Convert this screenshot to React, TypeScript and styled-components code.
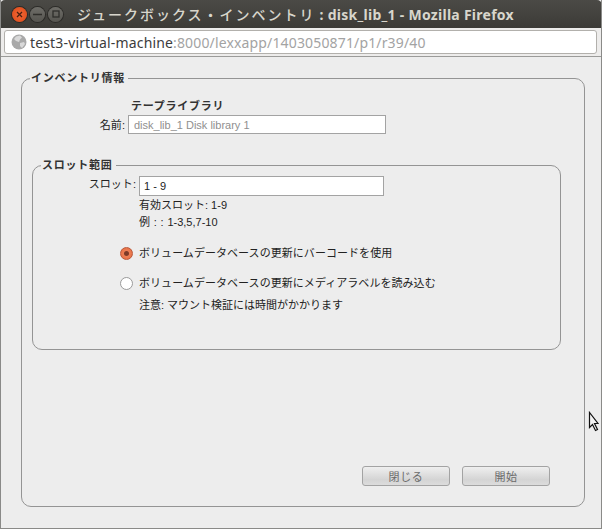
import React from "react";
import styled, { createGlobalStyle } from "styled-components";

const Global = createGlobalStyle`
  html, body { margin: 0; padding: 0; width: 602px; height: 529px; overflow: hidden; background: #ededed; }
  body { font-family: "Liberation Sans", "Noto Sans CJK JP", sans-serif; font-size: 11px; color: #222; }
  * { box-sizing: border-box; }
`;

const Page = styled.div`
  position: relative;
  width: 602px;
  height: 529px;
  display: flex;
  flex-direction: column;
  background: #ededed;
  border-right: 1px solid #8a8a88;
  border-left: 1px solid #8a8a88;
  border-bottom: 1px solid #8a8a88;
  overflow: hidden;
`;

const TitleBar = styled.header`
  height: 28px;
  flex: none;
  margin: 0 -1px;
  display: flex;
  align-items: center;
  padding: 0 0 0 12px;
  background: linear-gradient(#4b4a46, #3c3b37);
  border-radius: 5px 5px 0 0;
`;

const Dots = styled.div`
  display: flex;
  gap: 3px;
  margin-right: 14px;
`;

const Dot = styled.span<{ $bg: string }>`
  width: 15px;
  height: 15px;
  border-radius: 50%;
  display: flex;
  background: ${(p) => p.$bg};
  box-shadow: 0 0 0 1px #2c2b28;
  align-items: center;
  justify-content: center;
  svg { display: block; }
`;

const Title = styled.h1`
  margin: 0;
  font: bold 14px "Noto Sans", "Noto Sans CJK JP", sans-serif;
  color: #d8d6cc;
  white-space: nowrap;
  letter-spacing: 0.27px;
`;

const TitleCjk = styled.span`
  font-weight: 500;
  letter-spacing: 2px;
  margin-right: 4px;
`;

const UrlBar = styled.div`
  height: 29px;
  flex: none;
  padding: 2px 4px 0 3px;
  background: #edeceb;
  border-bottom: 1px solid #9b9b99;
`;

const UrlField = styled.div`
  height: 24px;
  background: #fff;
  border: 1px solid #b2b0ac;
  border-radius: 3px;
  display: flex;
  align-items: center;
  padding-left: 6px;
  gap: 3px;
  font: 14px "Noto Sans", sans-serif;
  letter-spacing: 0.15px;
  color: #a3a3a3;
  white-space: nowrap;
`;

const Host = styled.span`
  color: #3c3c3c;
`;

const Content = styled.main`
  flex: 1;
  padding: 14px 16px 21px 20px;
  display: flex;
  flex-direction: column;
`;

const Group = styled.fieldset<{ $h: number; $mr?: number }>`
  margin: 0 ${(p) => p.$mr ?? 0}px 0 0;
  padding: 0;
  min-width: 0;
  height: ${(p) => p.$h}px;
  border: 1px solid #949494;
  border-radius: 10px;
`;

const Legend = styled.legend`
  margin-left: 8px;
  padding: 0 3px 0 1px;
  font-weight: bold;
  font-size: 11px;
  line-height: 14px;
  letter-spacing: 0.75px;
  color: #333;
`;

const OuterBody = styled.div`
  height: 420px;
  display: flex;
  flex-direction: column;
  padding: 14px 10px 0 10px;
`;

const InnerBody = styled.div`
  height: 176px;
  display: flex;
  flex-direction: column;
  padding: 3px 0 0 0;
`;

const Heading = styled.div`
  margin-left: 99px;
  font-weight: bold;
  line-height: 14px;
  letter-spacing: 0.75px;
  color: #333;
`;

const FormRow = styled.div<{ $labelW: number; $top?: number }>`
  display: grid;
  grid-template-columns: ${(p) => p.$labelW}px auto;
  justify-content: start;
  align-items: center;
  column-gap: 3px;
  margin-top: ${(p) => p.$top ?? 0}px;
`;

const Label = styled.label<{ $lift?: number }>`
  text-align: right;
  color: #222;
  letter-spacing: 0.05px;
  padding-bottom: ${(p) => p.$lift ?? 0}px;
`;

const Field = styled.div<{ $w: number; $h: number; $muted?: boolean }>`
  width: ${(p) => p.$w}px;
  height: ${(p) => p.$h}px;
  padding: 0 5px 0 ${(p) => (p.$muted ? 5 : 4)}px;
  line-height: ${(p) => p.$h - 1}px;
  background: #fff;
  border: 1px solid #a3a3a3;
  color: ${(p) => (p.$muted ? "#8f8f8f" : "#222")};
  font-size: 11px;
`;

const Inner = styled.div`
  margin-top: 24px;
`;

const Hint = styled.div<{ $top: number }>`
  margin: ${(p) => p.$top}px 0 0 106px;
  line-height: 14px;
  color: #222;
`;

const Example = styled(Hint)`
  word-spacing: 0.7px;
`;

const RadioRow = styled.div<{ $top: number }>`
  margin: ${(p) => p.$top}px 0 0 87px;
  display: flex;
  align-items: center;
  gap: 6px;
  line-height: 14px;
  letter-spacing: 0.05px;
`;

const Radio = styled.span<{ $on?: boolean }>`
  width: 13px;
  height: 13px;
  flex: none;
  border-radius: 50%;
  display: flex;
  align-items: center;
  justify-content: center;
  border: 1px solid ${(p) => (p.$on ? "#b9583a" : "#9a9a9a")};
  background: ${(p) => (p.$on ? "radial-gradient(#f08a62, #e56a3e)" : "#fff")};
  &::after {
    content: "";
    display: ${(p) => (p.$on ? "block" : "none")};
    width: 5px;
    height: 5px;
    border-radius: 50%;
    background: #7d3a28;
  }
`;

const Spacer = styled.div`
  flex: 1;
`;

const Buttons = styled.div`
  display: flex;
  justify-content: flex-end;
  gap: 12px;
  padding: 0 24px 19px 0;
`;

const Button = styled.button`
  width: 88px;
  height: 20px;
  padding: 0;
  border: 1px solid #a3a3a3;
  border-radius: 3px;
  background: linear-gradient(#efefef, #d4d4d4 70%, #dcdcdc);
  font: 11px "Liberation Sans", "Noto Sans CJK JP", sans-serif;
  letter-spacing: 0.6px;
  color: #6a6a6a;
`;

const Cursor = styled.svg`
  position: absolute;
  left: 587px;
  top: 411px;
`;

export default function App() {
  return (
    <Page>
      <Global />
      <TitleBar>
        <Dots>
          <Dot $bg="radial-gradient(#f0683a, #dd4814)">
            <svg width="7" height="7" viewBox="0 0 7 7"><path d="M1 1l5 5M6 1l-5 5" stroke="#4a2010" strokeWidth="1.3" /></svg>
          </Dot>
          <Dot $bg="linear-gradient(#6e6d68, #565550)">
            <svg width="9" height="3" viewBox="0 0 9 3"><path d="M0 1.5h9" stroke="#2f2e2b" strokeWidth="1.5" /></svg>
          </Dot>
          <Dot $bg="linear-gradient(#6e6d68, #565550)">
            <svg width="8" height="8" viewBox="0 0 8 8"><rect x="1" y="1" width="6" height="6" fill="none" stroke="#2f2e2b" strokeWidth="1.3" /></svg>
          </Dot>
        </Dots>
        <Title><TitleCjk>ジュークボックス・インベントリ</TitleCjk>: disk_lib_1 - Mozilla Firefox</Title>
      </TitleBar>
      <UrlBar>
        <UrlField>
          <svg width="16" height="16" viewBox="0 0 16 16">
            <circle cx="8" cy="8" r="7.5" fill="#a9a9a9" />
            <path d="M5 2.5l4-1 2 2-2 2-1 2.5-3-1-2-2zM9 9l4-1 1 2-3 4-2-2z" fill="#d9d9d9" />
          </svg>
          <span><Host>test3-virtual-machine</Host>:8000/lexxapp/1403050871/p1/r39/40</span>
        </UrlField>
      </UrlBar>
      <Content>
        <Group $h={436}>
          <Legend>インベントリ情報</Legend>
          <OuterBody>
            <Heading>テープライブラリ</Heading>
            <FormRow $labelW={93} $top={2}>
              <Label $lift={2}>名前:</Label>
              <Field $w={258} $h={19} $muted>disk_lib_1 Disk library 1</Field>
            </FormRow>
            <Inner>
              <Group $h={192} $mr={13}>
                <Legend>スロット範囲</Legend>
                <InnerBody>
                  <FormRow $labelW={103}>
                    <Label $lift={5}>スロット:</Label>
                    <Field $w={245} $h={20}>1 - 9</Field>
                  </FormRow>
                  <Hint $top={2}>有効スロット: 1-9</Hint>
                  <Example $top={3}>例 : : 1-3,5,7-10</Example>
                  <RadioRow $top={17}><Radio $on />ボリュームデータベースの更新にバーコードを使用</RadioRow>
                  <RadioRow $top={16}><Radio />ボリュームデータベースの更新にメディアラベルを読み込む</RadioRow>
                  <Hint $top={8}>注意: マウント検証には時間がかかります</Hint>
                </InnerBody>
              </Group>
            </Inner>
            <Spacer />
            <Buttons>
              <Button>閉じる</Button>
              <Button>開始</Button>
            </Buttons>
          </OuterBody>
        </Group>
      </Content>
      <Cursor width="11" height="21" viewBox="0 0 11 21">
        <path d="M1.5 1.5v15l3-3 3 6 2-1-3-6h3.5z" fill="#f4f4f4" stroke="#111" strokeWidth="1.2" />
      </Cursor>
    </Page>
  );
}
